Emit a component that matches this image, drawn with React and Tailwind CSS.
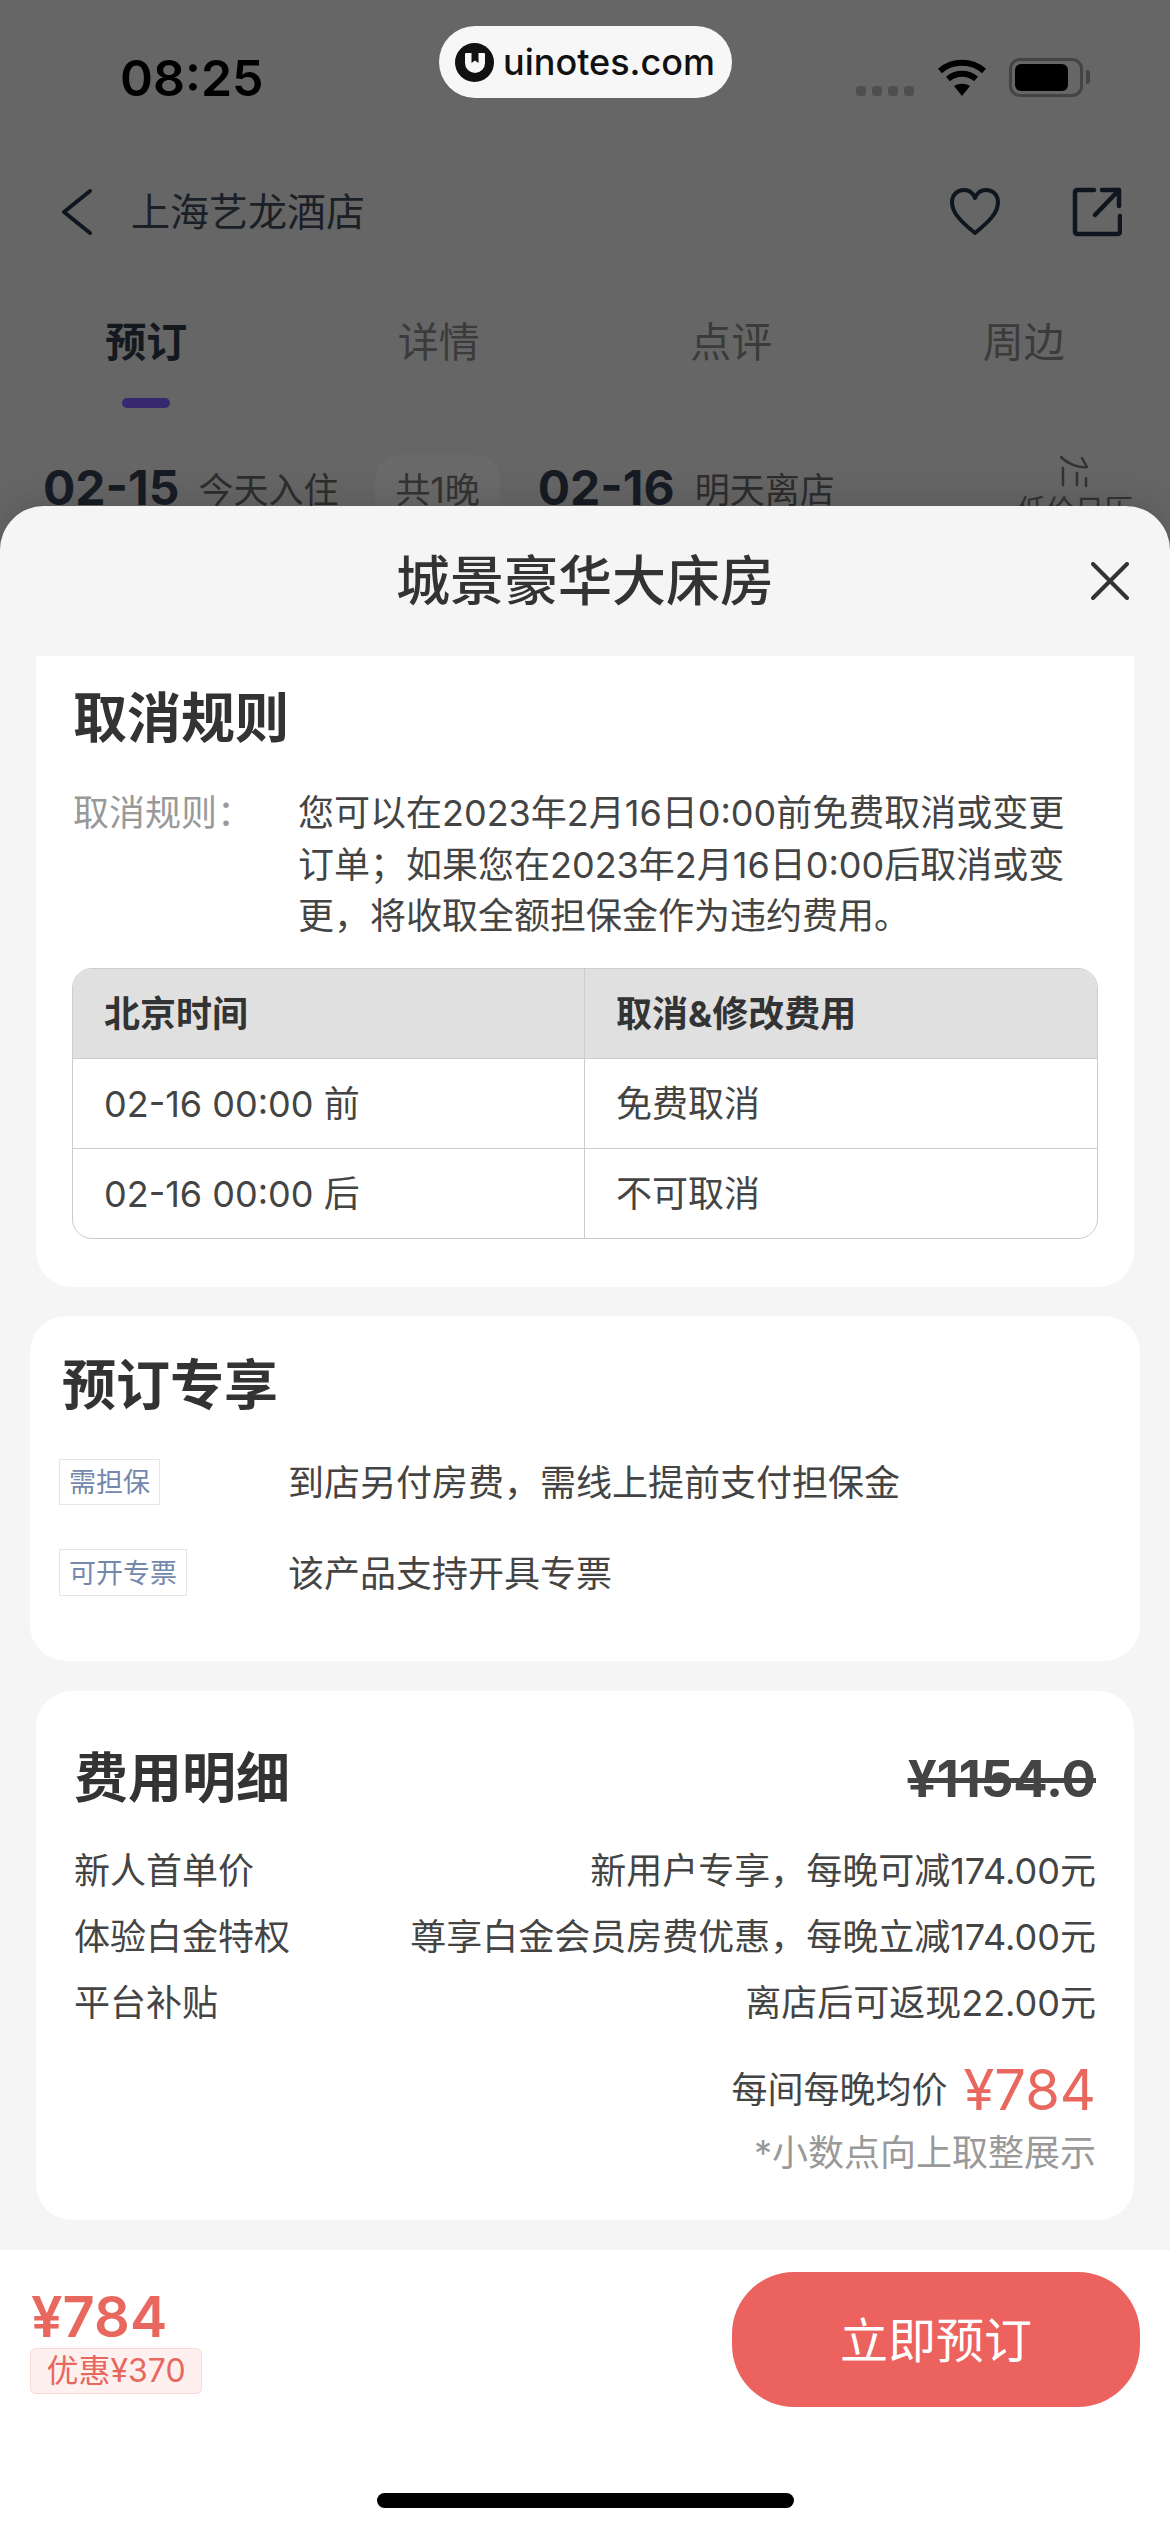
import React from "react";

const cjk = { fontFamily: '"Inter", "Noto Sans CJK SC", sans-serif' };

const priceRows = [
  { label: "新人首单价", value: "新用户专享，每晚可减174.00元" },
  { label: "体验白金特权", value: "尊享白金会员房费优惠，每晚立减174.00元" },
  { label: "平台补贴", value: "离店后可返现22.00元" },
];

const StatusBar = () => (
  <div className="relative flex h-[130px] items-start">
    <span className="ml-[120px] mt-[49px] text-[50px] leading-[58px] font-semibold text-black [font-family:Inter,sans-serif]">08:25</span>
    {/* watermark pill */}
    <div className="absolute left-[439px] top-[26px] flex h-[72px] w-[293px] items-center gap-[9px] rounded-[36px] bg-[#f7f7f7] pl-[16px]">
      <svg width="39" height="39" viewBox="0 0 39 39">
        <circle cx="19.5" cy="19.5" r="19.500" fill="#111" />
        <path d="M10 11a1 1 0 0 1 1-1h18a1 1 0 0 1 1 1v9a10 10 0 0 1-20 0z" fill="#f7f7f7" />
        <path d="M16.500 10v10l3.500-2.500 3.500 2.500v-10z" fill="#111" />
      </svg>
      <span className="text-[36px] leading-[44px] font-medium text-[#111] [font-family:Inter,sans-serif]">uinotes.com</span>
    </div>
    <div className="absolute left-[856px] top-[58px] flex items-start">
      <div className="mt-[28px] flex gap-[6px]">
        <div className="h-[10px] w-[10px] rounded-[3px] bg-[#4f4f4f]" />
        <div className="h-[10px] w-[10px] rounded-[3px] bg-[#4f4f4f]" />
        <div className="h-[10px] w-[10px] rounded-[3px] bg-[#4f4f4f]" />
        <div className="h-[10px] w-[10px] rounded-[3px] bg-[#4f4f4f]" />
      </div>
      <svg className="ml-[23px]" width="50" height="38" viewBox="0 0 50 38" fill="none" stroke="#000" strokeWidth="6">
        <path d="M3 13c12-11 32-11 44 0" />
        <path d="M11 21c8-7 20-7 28 0" />
        <path d="M25 38l-8-10c5-3 11-3 16 0z" fill="#000" stroke="none" />
      </svg>
      <div className="relative ml-[22px] h-[39px] w-[74px] rounded-[11px] border-[3px] border-[#444] p-[3px]">
        <div className="h-full w-[53px] rounded-[6px] bg-black" />
        <div className="absolute left-[74px] top-[9px] h-[14px] w-[4px] rounded-r-[3px] bg-[#444]" />
      </div>
    </div>
  </div>
);

const HotelBackdrop = () => (
  <div style={cjk}>
    <StatusBar />
    <div className="flex h-[164px] items-center">
      <svg className="ml-[60px]" width="34" height="48" viewBox="0 0 34 48" fill="none" stroke="#10161f" strokeWidth="4" strokeLinecap="round" strokeLinejoin="round">
        <path d="M30 3L4 24l26 21" />
      </svg>
      <span className="ml-[37px] text-[39px] leading-[50px] text-[#1b2027]">上海艺龙酒店</span>
      <svg className="ml-auto" width="52" height="48" viewBox="0 0 52 48" fill="none" stroke="#10161f" strokeWidth="4" strokeLinejoin="round">
        <path d="M26 45C10 32 3 24 3 14 3 7 8 2 15 2c5 0 9 3 11 8 2-5 6-8 11-8 7 0 12 5 12 12 0 10-7 18-23 31z" />
      </svg>
      <svg className="ml-[71px] mr-[48px]" width="50" height="50" viewBox="0 0 50 50" fill="none" stroke="#10161f" strokeWidth="4.500" strokeLinecap="round" strokeLinejoin="round">
        <path d="M22 3H5a2 2 0 0 0-2 2v40a2 2 0 0 0 2 2h41a2 2 0 0 0 2-2V29" />
        <path d="M23 28L47 3M30 3h17v16" />
      </svg>
    </div>
    <div className="grid h-[114px] grid-cols-4 text-center text-[41px] leading-[96px]">
      <div className="flex flex-col items-center font-bold text-[#14191f]">
        <span>预订</span>
        <div className="mt-[8px] h-[10px] w-[48px] rounded-full bg-[#36296f]" />
      </div>
      <span className="text-[#3b3b3b]">详情</span>
      <span className="text-[#3b3b3b]">点评</span>
      <span className="text-[#3b3b3b]">周边</span>
    </div>
    <div className="flex h-[164px] items-center text-[#171c24]">
      <span className="mb-[4px] ml-[43px] text-[48px] leading-[60px] font-bold">02-15</span>
      <span className="ml-[19px] text-[35px] leading-[50px] text-[#2d2d2d]">今天入住</span>
      <span className="ml-[37px] rounded-[24px] bg-[#6a6a6a] px-[20px] text-[35px] leading-[70px] text-[#333]">共1晚</span>
      <span className="mb-[4px] ml-[38px] text-[48px] leading-[60px] font-bold">02-16</span>
      <span className="ml-[20px] text-[35px] leading-[50px] text-[#2d2d2d]">明天离店</span>
      <div className="ml-auto mr-[35px] mt-[48px] flex w-[120px] flex-col items-center self-start">
        <svg width="30" height="32" viewBox="0 0 30 32" fill="none" stroke="#333" strokeWidth="2.500" strokeLinecap="round">
          <path d="M1 1C9 9 20 12 27 11M22 2l5 9M3 12v17M17 17v12M26 22v8" />
        </svg>
        <span className="mt-[3px] whitespace-nowrap text-[29px] leading-[40px] text-[#333]">低价日历</span>
      </div>
    </div>
  </div>
);

const CancelCard = () => (
  <div className="mx-[36px] rounded-b-[36px] bg-white pb-[48px] pt-[31px]">
    <h2 className="pl-[37px] text-[54px] leading-[64px] font-bold text-[#333]">取消规则</h2>
    <div className="mt-[37px] flex pl-[37px] text-[36px] leading-[51.500px]">
      <span className="w-[225px] text-[#999]">取消规则：</span>
      <div className="whitespace-nowrap text-[#444]">
        <div>您可以在2023年2月16日0:00前免费取消或变更</div>
        <div>订单；如果您在2023年2月16日0:00后取消或变</div>
        <div>更，将收取全额担保金作为违约费用。</div>
      </div>
    </div>
    <div className="mx-[36px] mt-[25px] grid grid-cols-2 overflow-hidden rounded-[20px] border border-[#ccc] text-[36px] text-[#444]">
      <div className="h-[90px] border-b border-r border-[#ccc] bg-[#e0e0e0] pl-[31px] font-bold leading-[90px] text-[#333]">北京时间</div>
      <div className="h-[90px] border-b border-[#ccc] bg-[#e0e0e0] pl-[31px] font-bold leading-[90px] text-[#333]">取消&amp;修改费用</div>
      <div className="h-[90px] border-b border-r border-[#ccc] pl-[31px] leading-[90px]">02-16 00:00 前</div>
      <div className="h-[90px] border-b border-[#ccc] pl-[31px] leading-[90px]">免费取消</div>
      <div className="h-[89px] border-r border-[#ccc] pl-[31px] leading-[90px]">02-16 00:00 后</div>
      <div className="h-[89px] pl-[31px] leading-[90px]">不可取消</div>
    </div>
  </div>
);

const BookingPerksCard = () => (
  <div className="mx-[30px] mt-[29px] h-[345px] rounded-[36px] bg-white pl-[29px] pt-[38px]">
    <h2 className="pl-[3px] text-[54px] leading-[64px] font-bold text-[#333]">预订专享</h2>
    <div className="mt-[40px] flex items-center">
      <div className="w-[229px]">
        <span className="inline-block h-[46px] w-[101px] border border-[#e6e6e6] text-center text-[27px] leading-[46px] text-[#7388ab]">需担保</span>
      </div>
      <span className="pt-[2px] text-[36px] leading-[46px] text-[#444]">到店另付房费，需线上提前支付担保金</span>
    </div>
    <div className="mt-[43px] flex items-center">
      <div className="w-[229px]">
        <span className="inline-block h-[47px] w-[128px] border border-[#e6e6e6] text-center text-[27px] leading-[47px] text-[#7388ab]">可开专票</span>
      </div>
      <span className="pt-[2px] text-[36px] leading-[46px] text-[#444]">该产品支持开具专票</span>
    </div>
  </div>
);

const PriceCard = () => (
  <div className="mx-[36px] mt-[30px] rounded-[36px] bg-white px-[38px] pb-[42px] pt-[56px]">
    <div className="flex items-center justify-between">
      <h2 className="text-[54px] leading-[64px] font-bold text-[#333]">费用明细</h2>
      <span className="text-[51px] leading-[60px] font-bold text-[#444] line-through">¥1154.0</span>
    </div>
    <div className="mt-[27px] text-[36px] leading-[66px] text-[#444]">
      {priceRows.map((row) => (
        <div key={row.label} className="flex justify-between">
          <span>{row.label}</span>
          <span>{row.value}</span>
        </div>
      ))}
    </div>
    <div className="mt-[22px] flex h-[64px] items-center justify-end">
      <span className="text-[36px] leading-[50px] text-[#444]">每间每晚均价</span>
      <span className="ml-[16px] text-[56px] leading-[64px] text-[#e8685f]">¥784</span>
    </div>
    <div className="mt-[6px] text-right text-[36px] leading-[50px] text-[#999]">*小数点向上取整展示</div>
  </div>
);

const Footer = () => (
  <div className="mt-[30px] flex-1 bg-white">
    <div className="flex h-[157px] items-start justify-between pr-[30px]">
      <div className="pl-[30px] pt-[37px]">
        <div className="pl-[1px] text-[56px] leading-[60px] font-semibold text-[#e8685f]">¥784</div>
        <div className="mt-[1px] h-[46px] w-[172px] rounded-[6px] border border-[#f9dad6] bg-[#fdf0ee] text-center text-[32px] leading-[44px] text-[#e8685f]">优惠¥370</div>
      </div>
      <button className="mt-[22px] h-[135px] w-[408px] rounded-[62px] bg-[#eb625e] pt-[3px] text-[48px] text-white">立即预订</button>
    </div>
    <div className="mx-auto mt-[86px] h-[15px] w-[417px] rounded-full bg-black" />
  </div>
);

const App = () => {
  return (
    <div className="relative h-[2532px] w-[1170px] overflow-hidden bg-[#666666]" style={cjk}>
      <HotelBackdrop />
      {/* room detail sheet */}
      <div className="absolute inset-x-0 bottom-0 top-[506px] flex flex-col rounded-t-[44px] bg-[#f5f5f5] shadow-[0_-8px_30px_rgba(0,0,0,0.12)]">
        <div className="relative flex h-[150px] items-start justify-center pt-[46px]">
          <h1 className="text-[54px] leading-[60px] font-medium text-[#333]">城景豪华大床房</h1>
          <svg className="absolute left-[1091px] top-[56px]" width="38" height="38" viewBox="0 0 38 38" fill="none" stroke="#333" strokeWidth="4" strokeLinecap="round">
            <path d="M2 2l34 34M36 2L2 36" />
          </svg>
        </div>
        <CancelCard />
        <BookingPerksCard />
        <PriceCard />
        <Footer />
      </div>
    </div>
  );
};

export default App;
